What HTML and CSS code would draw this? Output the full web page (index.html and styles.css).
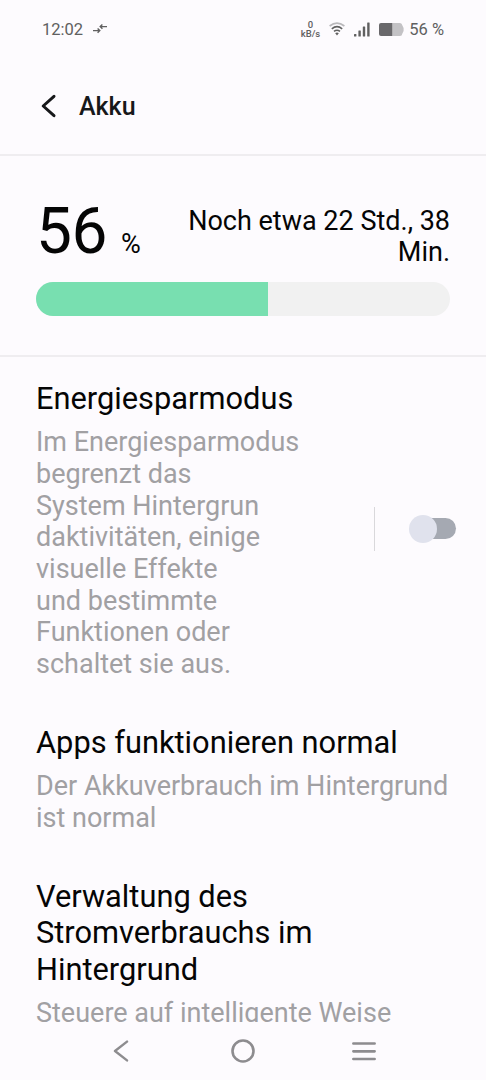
FILE: index.html
```
<!DOCTYPE html>
<html lang="de">
<head>
<meta charset="utf-8">
<meta name="viewport" content="width=device-width, initial-scale=1">
<title>Akku</title>
<link rel="stylesheet" href="styles.css">
</head>
<body>
<div class="screen">
  <div class="status">
    <span class="time">12:02</span>
    <svg class="transfer" width="16" height="12" viewBox="0 0 16 12" fill="none" stroke="#606060" stroke-width="1.4"><path d="M1 7.6H7.4M5.6 5.4L7.8 7.6L5.6 9.8M15 3.6H8.6M10.4 1.4L8.2 3.6L10.4 5.8"/></svg>
    <span class="speed"><span>0</span><span>kB/s</span></span>
    <svg class="wifi" width="16" height="14" viewBox="0 0 16 14" fill="none" stroke-width="1.6"><path stroke="#b9b8bb" d="M.6 4Q8-1.8 15.4 4"/><path stroke="#606060" d="M2.8 6.8Q8 2.6 13.2 6.8M5 9.4Q8 7 11 9.4"/><path fill="#606060" d="M6.2 11.2Q8 9.9 9.8 11.2L8 13.4Z"/></svg>
    <svg class="signal" width="16" height="15" viewBox="0 0 16 15" fill="#606060"><rect x="0" y="12" width="2.4" height="2.5" rx=".5"/><rect x="4.4" y="8.6" width="2.4" height="5.9" rx=".5"/><rect x="8.8" y="4.6" width="2.4" height="9.9" rx=".5"/><rect x="13.2" y=".5" width="2.4" height="14" rx=".5"/></svg>
    <svg class="battery" width="25" height="13" viewBox="0 0 25 13"><path fill="#c3c2c5" d="M13 0H21Q23 0 23.4 2.5L24.6 5V8L23.4 10.5Q23 13 21 13H13Z"/><path fill="#69686b" d="M2 0H13.2V13H2Q0 13 0 11V2Q0 0 2 0Z"/></svg>
    <span class="level">56 %</span>
  </div>
  <header class="header">
    <svg width="18" height="24" viewBox="0 0 18 24" fill="none" stroke="#17181a" stroke-width="3" stroke-linecap="round" stroke-linejoin="round"><path d="M15 2.3L4.2 12L15 21.7"/></svg>
    <h1>Akku</h1>
  </header>
  <section class="summary">
    <div class="figures">
      <div class="charge">56<span class="unit">%</span></div>
      <div class="remaining">Noch etwa 22 Std., 38<br>Min.</div>
    </div>
    <div class="bar"><div class="fill" style="width:56%"></div></div>
  </section>
  <main class="list">
    <section class="item saver">
      <h2>Energiesparmodus</h2>
      <div class="row">
        <p>Im Energiesparmodus<br>begrenzt das<br>System Hintergrun<br>daktivitäten, einige<br>visuelle Effekte<br>und bestimmte<br>Funktionen oder<br>schaltet sie aus.</p>
        <div class="control"><span class="divider"></span><span class="toggle"><span class="knob"></span></span></div>
      </div>
    </section>
    <section class="item">
      <h2>Apps funktionieren normal</h2>
      <p>Der Akkuverbrauch im Hintergrund<br>ist normal</p>
    </section>
    <section class="item">
      <h2>Verwaltung des<br>Stromverbrauchs im<br>Hintergrund</h2>
      <p>Steuere auf intelligente Weise</p>
    </section>
  </main>
  <nav class="nav">
    <svg width="16" height="22" viewBox="0 0 16 22" fill="none" stroke="#8d8c8f" stroke-width="2.4" stroke-linecap="round" stroke-linejoin="round"><path d="M14 1.6L2 11L14 20.4"/></svg>
    <svg class="home" width="24" height="24" viewBox="0 0 24 24" fill="none" stroke="#8d8c8f" stroke-width="2.6"><circle cx="12" cy="12" r="10.5"/></svg>
    <svg width="24" height="20" viewBox="0 0 24 20" fill="none" stroke="#8d8c8f" stroke-width="2.7" stroke-linecap="round"><path d="M1.4 2.5H22.6M1.4 10.3H22.6M1.4 18H22.6"/></svg>
  </nav>
</div>
</body>
</html>
```
FILE: styles.css
```
* { box-sizing: border-box; }
body { margin: 0; background: #fdfbfe; font-family: Roboto, sans-serif; color: #050505; }
h1, h2, p { margin: 0; font-weight: 400; }
svg { display: block; flex: none; }
.screen { width: 486px; height: 1080px; display: flex; flex-direction: column; overflow: hidden; white-space: nowrap; }

.status { height: 58px; padding: 0 42px; display: flex; align-items: center; color: #606060; font-size: 16.5px; flex: none; }
.transfer { margin-left: 9px; }
.speed { margin-left: auto; display: flex; flex-direction: column; align-items: center; font-size: 9.5px; line-height: 9.5px; font-weight: 500; }
.wifi { margin-left: 9px; }
.signal { margin-left: 9px; }
.battery { margin-left: 9px; }
.level { margin-left: 5px; }

.header { height: 98px; padding: 1px 0 0 39px; display: flex; align-items: center; gap: 22px; border-bottom: 2px solid #efedf0; color: #17181a; flex: none; }
.header svg { margin-top: -1px; }
.header h1 { font-size: 25px; font-weight: 500; line-height: 30px; padding-top: 1px; }

.summary { height: 201px; padding: 50px 36px 0; border-bottom: 2px solid #efedf0; flex: none; }
.figures { height: 76px; display: flex; justify-content: space-between; }
.charge { font-size: 64px; line-height: 52px; letter-spacing: -.5px; }
.unit { font-size: 27px; margin-left: 14px; letter-spacing: 0; }
.remaining { font-size: 27px; line-height: 31.65px; text-align: right; margin-top: -.5px; }
.bar { height: 34px; border-radius: 17px; overflow: hidden; background: #f1f1f1; }
.fill { height: 100%; background: #78dfb0; }

.list { height: 665px; padding: 24.3px 36px 0; overflow: hidden; flex: none; display: flex; flex-direction: column; gap: 44.6px; }
.item { flex: none; }
.item h2 { font-size: 30.8px; line-height: 36.3px; margin-bottom: 9.7px; }
.item p { font-size: 27px; line-height: 31.65px; color: #a1a0a3; }
.row { display: flex; justify-content: space-between; }
.control { height: 44px; margin: 79.5px -6px 0 0; display: flex; align-items: center; gap: 34px; }
.divider { width: 1.5px; height: 44px; background: #d9d8db; }
.toggle { position: relative; width: 47px; height: 28px; display: flex; align-items: center; }
.toggle::before { content: ""; width: 40px; height: 21px; margin-left: 7px; border-radius: 11px; background: #a5a9b2; }
.knob { position: absolute; left: 0; top: 0; width: 28px; height: 28px; border-radius: 50%; background: #e0e2ed; }

.nav { height: 58px; display: flex; justify-content: space-between; align-items: center; padding: 0 110px 0 113px; flex: none; }
.home { margin-left: 4px; }
```
